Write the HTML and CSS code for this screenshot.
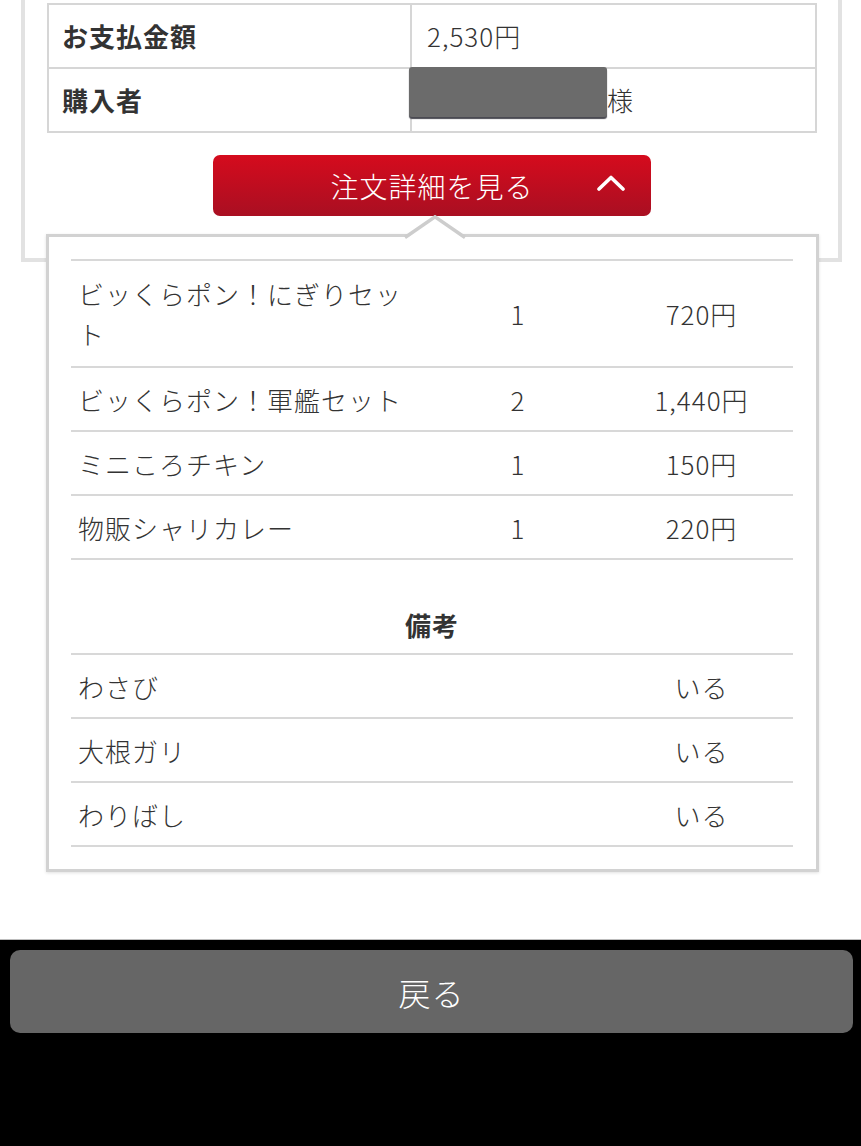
FILE: index.html
```html
<!DOCTYPE html>
<html lang="ja">
<head>
<meta charset="utf-8">
<title>注文詳細</title>
<link rel="stylesheet" href="styles.css">
</head>
<body>
<div class="page">
  <section class="card">
    <table class="info">
      <tr>
        <th>お支払金額</th>
        <td>2,530円</td>
      </tr>
      <tr>
        <th>購入者</th>
        <td class="buyer"><span class="redact"></span><span class="hidden-name"></span>様</td>
      </tr>
    </table>
    <button class="detail-btn" type="button">
      <span>注文詳細を見る</span>
      <svg class="chev" width="28" height="16" viewBox="0 0 28 16"><polyline points="2,14 14,2.5 26,14" fill="none" stroke="#fff" stroke-width="3.6" stroke-linecap="round" stroke-linejoin="round"/></svg>
    </button>
  </section>

  <section class="panel">
    <svg class="notch" width="62" height="25" viewBox="0 0 62 25"><polygon points="0,25 31,3 62,25" fill="#fff"/><polyline points="1,22.5 31,1.8 61,22.5" fill="none" stroke="#cdcdcd" stroke-width="3.4" stroke-linejoin="miter"/></svg>
    <div class="items">
      <div class="item">
        <div class="name">ビッくらポン！にぎりセット</div>
        <div class="qty">1</div>
        <div class="price">720円</div>
      </div>
      <div class="item">
        <div class="name">ビッくらポン！軍艦セット</div>
        <div class="qty">2</div>
        <div class="price">1,440円</div>
      </div>
      <div class="item">
        <div class="name">ミニころチキン</div>
        <div class="qty">1</div>
        <div class="price">150円</div>
      </div>
      <div class="item">
        <div class="name">物販シャリカレー</div>
        <div class="qty">1</div>
        <div class="price">220円</div>
      </div>
      <div class="remarks-title">備考</div>
      <div class="remark">
        <div class="name">わさび</div>
        <div class="price">いる</div>
      </div>
      <div class="remark">
        <div class="name">大根ガリ</div>
        <div class="price">いる</div>
      </div>
      <div class="remark">
        <div class="name">わりばし</div>
        <div class="price">いる</div>
      </div>
    </div>
  </section>

  <footer class="bar">
    <button class="back-btn" type="button">戻る</button>
  </footer>
</div>
</body>
</html>
```

FILE: styles.css
```css
* { box-sizing: border-box; }

html, body {
  margin: 0;
  padding: 0;
  background: #fff;
}

body {
  font-family: "Noto Sans CJK JP", "Noto Sans", sans-serif;
  font-weight: 300;
  color: #333;
  font-size: 26px;
  letter-spacing: 1px;
}

.page {
  width: 861px;
  height: 1146px;
  overflow: hidden;
  display: flex;
  flex-direction: column;
}

.card {
  margin: 0 19px 0 21px;
  border: 4px solid #e2e2e2;
  border-top: none;
  padding: 3px 21px 42px 22px;
  display: flex;
  flex-direction: column;
}

.info {
  width: 100%;
  border-collapse: collapse;
}

.info th,
.info td {
  border: 2px solid #d6d6d6;
  height: 64px;
  padding: 0 13px;
  text-align: left;
  vertical-align: middle;
  line-height: 36px;
}

.info th {
  width: 363px;
  font-weight: bold;
  color: #333;
}

.info td {
  color: #333;
  padding-left: 15px;
}

.buyer {
  position: relative;
}

.hidden-name {
  display: inline-block;
  width: 180px;
}

.redact {
  position: absolute;
  left: -3px;
  top: -2px;
  width: 198px;
  height: 50px;
  background: #6b6b6b;
  border-radius: 3px;
  box-shadow: 0 2px 1px #4a4a52;
}

.detail-btn {
  position: relative;
  align-self: center;
  margin-top: 22px;
  width: 438px;
  height: 61px;
  border: none;
  border-radius: 7px;
  background: linear-gradient(#d50b1d, #a90f22);
  color: #fff;
  font-family: inherit;
  font-weight: 300;
  font-size: 28px;
  letter-spacing: 1px;
  padding: 0;
  display: flex;
  align-items: center;
  justify-content: center;
}

.chev {
  position: absolute;
  right: 26px;
  top: 20px;
}

.panel {
  position: relative;
  z-index: 1;
  margin: -28px 0 0 46px;
  width: 773px;
  background: #fff;
  border: 3px solid #d2d2d2;
  box-shadow: 0 1px 3px rgba(0, 0, 0, 0.12);
  padding: 22px 23px 22px 22px;
}

.notch {
  position: absolute;
  left: 355px;
  top: -22px;
}

.items {
  border-top: 2px solid #d8d8d8;
}

.item {
  display: grid;
  grid-template-columns: 369px 156px 197px;
  align-items: center;
  padding: 13px 0 12px;
  border-bottom: 2px solid #d8d8d8;
  line-height: 37px;
}

.item:first-child {
  padding: 14px 0 14px;
}

.item .name {
  padding: 0 30px 0 7px;
  line-height: 40px;
  margin: -1.5px 0;
}

.qty {
  text-align: center;
}

.price {
  text-align: center;
  padding-left: 14px;
}

.remarks-title {
  text-align: center;
  font-weight: bold;
  line-height: 36px;
  padding: 47px 0 10px;
  border-bottom: 2px solid #d8d8d8;
}

.remark {
  display: grid;
  grid-template-columns: 525px 197px;
  align-items: center;
  padding: 13px 0 12px;
  border-bottom: 2px solid #d8d8d8;
  line-height: 37px;
}

.remark .name {
  padding-left: 7px;
}

.bar {
  margin-top: 67px;
  flex: 1;
  background: #000;
  border-top: 1px solid #bdbdbd;
  padding: 10px 8px 0 10px;
}

.back-btn {
  display: block;
  width: 100%;
  height: 83px;
  border: none;
  border-radius: 10px;
  background: #666;
  color: #fff;
  font-family: inherit;
  font-weight: 300;
  font-size: 32px;
  letter-spacing: 1px;
  padding: 0;
}
```
